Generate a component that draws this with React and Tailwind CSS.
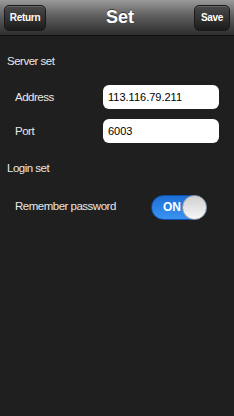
import React, { useState } from "react";

export default function App() {
  const [address, setAddress] = useState("113.116.79.211");
  const [port, setPort] = useState("6003");
  const [remember, setRemember] = useState(true);

  return (
    <div
      className="w-[234px] h-[416px] bg-[#1f1f1f] flex flex-col overflow-hidden"
      style={{ fontFamily: '"Liberation Sans", Arial, sans-serif' }}
    >
      {/* Header */}
      <div className="h-[36px] shrink-0 flex items-center justify-between px-[4px] bg-gradient-to-b from-[#9a9a9a] via-[#5a5a5a] to-[#2e2e2e] border-b border-[#111]">
        <button className="h-[26px] w-[42px] rounded-[5px] border border-[#1a1a1a] bg-gradient-to-b from-[#4a4a4a] to-[#1c1c1c] text-white text-[10px] font-bold tracking-[-0.3px] shadow-[inset_0_1px_0_rgba(255,255,255,0.15)]">
          Return
        </button>
        <span className="text-white text-[18px] font-bold [text-shadow:0_-1px_0_rgba(0,0,0,0.5)]">Set</span>
        <button className="h-[26px] w-[36px] rounded-[5px] border border-[#1a1a1a] bg-gradient-to-b from-[#4a4a4a] to-[#1c1c1c] text-white text-[10px] font-bold tracking-[-0.3px] shadow-[inset_0_1px_0_rgba(255,255,255,0.15)]">
          Save
        </button>
      </div>

      {/* Server set */}
      <div className="pl-[7px] pt-[17px] text-[#e8e8e8] text-[11.5px] tracking-[-0.5px]">Server set</div>
      <div className="flex flex-col gap-[10px] mt-[15px] pl-[15px] pr-[15px]">
        <div className="flex items-center justify-between">
          <span className="text-[#e8e8e8] text-[11.5px] tracking-[-0.5px]">Address</span>
          <input
            value={address}
            onChange={(e) => setAddress(e.target.value)}
            className="w-[116px] h-[24px] rounded-[6px] bg-white px-[5px] text-[11px] text-black outline-none"
          />
        </div>
        <div className="flex items-center justify-between">
          <span className="text-[#e8e8e8] text-[11.5px] tracking-[-0.5px]">Port</span>
          <input
            value={port}
            onChange={(e) => setPort(e.target.value)}
            className="w-[116px] h-[24px] rounded-[6px] bg-white px-[5px] text-[11px] text-black outline-none"
          />
        </div>
      </div>

      {/* Login set */}
      <div className="pl-[7px] pt-[17px] text-[#e8e8e8] text-[11.5px] tracking-[-0.5px]">Login set</div>
      <div className="flex items-center mt-[17px] pl-[15px]">
        <span className="text-[#e8e8e8] text-[11.5px] tracking-[-0.5px] w-[136px]">Remember password</span>
        <button
          onClick={() => setRemember(!remember)}
          className="relative w-[56px] h-[25px] rounded-full bg-gradient-to-b from-[#1f6fd6] to-[#3a93f0] border border-[#0d4fa8] flex items-center"
        >
          <span className="pl-[11px] text-white text-[12px] font-bold">{remember ? "ON" : "OFF"}</span>
          <span className="absolute right-[-1px] top-[-1px] w-[25px] h-[25px] rounded-full bg-gradient-to-b from-[#cfcfcf] to-[#f8f8f8] border border-[#9a9a9a]" />
        </button>
      </div>
    </div>
  );
}
